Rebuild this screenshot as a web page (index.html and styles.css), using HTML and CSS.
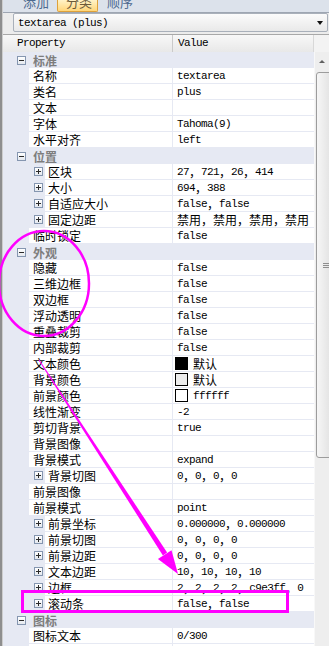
FILE: index.html
```html
<!DOCTYPE html>
<html lang="zh-CN">
<head>
    <meta charset="UTF-8">
    <title>属性</title>
    <link rel="stylesheet" href="styles.css">
</head>
<body>
    <div class="panel">
        <div class="tabs">
            <div class="tab"><span>添加</span></div>
            <div class="tab on"><span>分类</span></div>
            <div class="tab last"><span>顺序</span></div>
        </div>
        <div class="bar">
            <div class="combo"><span>textarea (plus)</span><i class="drop"></i></div>
        </div>
        <div class="head">
            <div class="hp">Property</div>
            <div class="hv">Value</div>
            <div class="hs"></div>
        </div>
        <div class="grid">
            <div class="list">
                <div class="cat"><i class="minus"></i>标准</div>
                <div class="row"><span class="m"></span><span class="n">名称</span><span class="v">textarea</span></div>
                <div class="row"><span class="m"></span><span class="n">类名</span><span class="v">plus</span></div>
                <div class="row"><span class="m"></span><span class="n">文本</span><span class="v"></span></div>
                <div class="row"><span class="m"></span><span class="n">字体</span><span class="v">Tahoma(9)</span></div>
                <div class="row"><span class="m"></span><span class="n">水平对齐</span><span class="v">left</span></div>

                <div class="cat"><i class="minus"></i>位置</div>
                <div class="row sub"><span class="m"><i class="plus"></i></span><span class="n">区块</span><span class="v">27<span class="w">，</span>721<span class="w">，</span>26<span class="w">，</span>414</span></div>
                <div class="row sub"><span class="m"><i class="plus"></i></span><span class="n">大小</span><span class="v">694<span class="w">，</span>388</span></div>
                <div class="row sub"><span class="m"><i class="plus"></i></span><span class="n">自适应大小</span><span class="v">false<span class="w">，</span>false</span></div>
                <div class="row sub"><span class="m"><i class="plus"></i></span><span class="n">固定边距</span><span class="v"><span class="w">禁用，禁用，禁用，禁用</span></span></div>
                <div class="row"><span class="m"></span><span class="n">临时锁定</span><span class="v">false</span></div>

                <div class="cat"><i class="minus"></i>外观</div>
                <div class="row"><span class="m"></span><span class="n">隐藏</span><span class="v">false</span></div>
                <div class="row"><span class="m"></span><span class="n">三维边框</span><span class="v">false</span></div>
                <div class="row"><span class="m"></span><span class="n">双边框</span><span class="v">false</span></div>
                <div class="row"><span class="m"></span><span class="n">浮动透明</span><span class="v">false</span></div>
                <div class="row"><span class="m"></span><span class="n">重叠裁剪</span><span class="v">false</span></div>
                <div class="row"><span class="m"></span><span class="n">内部裁剪</span><span class="v">false</span></div>
                <div class="row"><span class="m"></span><span class="n">文本颜色</span><span class="v"><i class="sw black"></i><span class="w">默认</span></span></div>
                <div class="row"><span class="m"></span><span class="n">背景颜色</span><span class="v"><i class="sw gray"></i><span class="w">默认</span></span></div>
                <div class="row"><span class="m"></span><span class="n">前景颜色</span><span class="v"><i class="sw white"></i>ffffff</span></div>
                <div class="row"><span class="m"></span><span class="n">线性渐变</span><span class="v">-2</span></div>
                <div class="row"><span class="m"></span><span class="n">剪切背景</span><span class="v">true</span></div>
                <div class="row"><span class="m"></span><span class="n">背景图像</span><span class="v"></span></div>
                <div class="row"><span class="m"></span><span class="n">背景模式</span><span class="v">expand</span></div>
                <div class="row sub"><span class="m"><i class="plus"></i></span><span class="n">背景切图</span><span class="v">0<span class="w">，</span>0<span class="w">，</span>0<span class="w">，</span>0</span></div>
                <div class="row"><span class="m"></span><span class="n">前景图像</span><span class="v"></span></div>
                <div class="row"><span class="m"></span><span class="n">前景模式</span><span class="v">point</span></div>
                <div class="row sub"><span class="m"><i class="plus"></i></span><span class="n">前景坐标</span><span class="v">0.000000<span class="w">，</span>0.000000</span></div>
                <div class="row sub"><span class="m"><i class="plus"></i></span><span class="n">前景切图</span><span class="v">0<span class="w">，</span>0<span class="w">，</span>0<span class="w">，</span>0</span></div>
                <div class="row sub"><span class="m"><i class="plus"></i></span><span class="n">前景边距</span><span class="v">0<span class="w">，</span>0<span class="w">，</span>0<span class="w">，</span>0</span></div>
                <div class="row sub"><span class="m"><i class="plus"></i></span><span class="n">文本边距</span><span class="v">10<span class="w">，</span>10<span class="w">，</span>10<span class="w">，</span>10</span></div>
                <div class="row sub"><span class="m"><i class="plus"></i></span><span class="n">边框</span><span class="v">2<span class="w">，</span>2<span class="w">，</span>2<span class="w">，</span>2<span class="w">，</span>c9e3ff<span class="w">，</span>0</span></div>
                <div class="row sub"><span class="m"><i class="plus"></i></span><span class="n">滚动条</span><span class="v">false<span class="w">，</span>false</span></div>

                <div class="cat"><i class="minus"></i>图标</div>
                <div class="row"><span class="m"></span><span class="n">图标文本</span><span class="v">0/300</span></div>
                <div class="row"><span class="m"></span><span class="n"></span><span class="v"></span></div>
            </div>
            <div class="sb">
                <div class="up"><i></i></div>
                <div class="thumb"><i class="grip"></i></div>
            </div>
        </div>
    </div>

    <!-- 标注 -->
    <svg class="marks" width="329" height="646" viewBox="0 0 329 646">
        <ellipse cx="44" cy="283.5" rx="45" ry="52.5" fill="none" stroke="#f0f" stroke-width="2.5"/>
        <polygon points="38.6,360.3 39.4,359.7 167.1,552.6 162.9,555.4" fill="#f0f"/>
        <polygon points="178,574 157.9,559 171.5,550.2" fill="#f0f"/>
        <rect x="22.5" y="591.5" width="265" height="20" fill="none" stroke="#f0f" stroke-width="3"/>
    </svg>
</body>
</html>
```

FILE: styles.css
```css
body {
    margin: 0;
    width: 329px;
    height: 646px;
    overflow: hidden;
    position: relative;
    background: linear-gradient(to right, #8e8e8e 0 2px, #cdcdcd 2px 3px, #ececec 3px);
    font-family: "Liberation Mono", monospace;
}
.panel {
    margin-left: 3px;
    width: 340px;
}
.tabs {
    height: 12px;
    overflow: hidden;
    display: flex;
    padding-left: 16px;
    background: #dce2eb;
    border-bottom: 1px solid #9ea6b2;
}
.tab {
    height: 12px;
    padding: 0 4px;
    color: #4d6a90;
    font-family: "Noto Sans CJK SC", sans-serif;
    font-size: 13px;
}
.tab span {
    display: block;
    line-height: 14px;
    margin-top: -5px;
}
.tab.on {
    margin-left: 4px;
    height: 11px;
    padding: 0 5px 0 8px;
    border: 1px solid #dea13a;
    border-top: none;
    border-radius: 0 0 2px 2px;
    background: linear-gradient(#fff3c8, #ffd67a);
    color: #6b5a3a;
}
.tab.last {
    margin-left: 5px;
}
.bar {
    height: 21px;
    padding-left: 10px;
    background: #ececec;
}
.combo {
    box-sizing: border-box;
    width: 315px;
    height: 19px;
    display: flex;
    align-items: center;
    padding-left: 4px;
    border: 1px solid #a9b0ba;
    border-radius: 2px;
    background: linear-gradient(#fbfbfb, #e9e9e9);
    font-size: 11px;
    letter-spacing: -0.6px;
    color: #000;
}
.drop {
    margin-left: auto;
    margin-right: 4px;
    width: 0;
    height: 0;
    border-left: 3px solid transparent;
    border-right: 3px solid transparent;
    border-top: 4px solid #111;
}
.head {
    display: flex;
    height: 17px;
    border-top: 1px solid #a8a8a8;
    background: linear-gradient(#f8f8f8, #e8e8e8);
    font-size: 11px;
    letter-spacing: -0.6px;
    line-height: 17px;
    color: #000;
}
.hp {
    box-sizing: border-box;
    width: 170px;
    padding-left: 14px;
    border-right: 1px solid #cacaca;
}
.hv {
    box-sizing: border-box;
    width: 141px;
    padding-left: 5px;
    border-right: 1px solid #d8d8d8;
}
.hs {
    flex: 1;
    background: #f3f3f3;
}
.grid {
    display: flex;
    height: 594px;
}
.list {
    width: 311px;
    flex: none;
    background: #e6e9f3;
}
.cat {
    height: 16px;
    display: flex;
    align-items: center;
    padding-left: 14px;
    font-family: "Noto Sans CJK SC", sans-serif;
    font-size: 12px;
    font-weight: bold;
    color: #7d7d7d;
}
.minus, .plus {
    box-sizing: border-box;
    width: 9px;
    height: 9px;
    border: 1px solid #8596b0;
    background: linear-gradient(#ffffff, #e4e8ee);
    position: relative;
    flex: none;
}
.minus {
    margin-right: 7px;
}
.minus::after, .plus::after, .plus::before {
    content: "";
    position: absolute;
    background: #2a2a2a;
}
.minus::after, .plus::after {
    left: 1px;
    top: 3px;
    width: 5px;
    height: 1px;
}
.plus::before {
    left: 3px;
    top: 1px;
    width: 1px;
    height: 5px;
}
.row {
    display: grid;
    grid-template-columns: 26px 143px 1fr;
    height: 15px;
    margin-bottom: 1px;
}
.row.sub {
    grid-template-columns: 42px 127px 1fr;
}
.m {
    display: flex;
    align-items: center;
}
.plus {
    display: block;
    margin-left: 31px;
}
.n {
    background: #fff;
    padding-left: 4px;
    font-family: "Noto Sans CJK SC", sans-serif;
    font-size: 12px;
    line-height: 15px;
    color: #000;
    white-space: nowrap;
    overflow: hidden;
}
.sub .n {
    padding-left: 3px;
}
.v {
    background: #fff;
    margin-left: 1px;
    padding-left: 4px;
    font-size: 11px;
    letter-spacing: -0.6px;
    line-height: 16px;
    color: #000;
    white-space: nowrap;
    overflow: hidden;
    display: flex;
    align-items: center;
}
.w {
    font-family: "Noto Sans CJK SC", sans-serif;
    font-size: 12px;
    letter-spacing: 0;
    line-height: 15px;
}
.sw {
    display: inline-block;
    width: 11px;
    height: 11px;
    border: 1px solid #000;
    margin: 0 5px 0 -2px;
    flex: none;
}
.sw.black { background: #000; }
.sw.gray { background: #ececec; }
.sw.white { background: #fff; }
.sb {
    width: 17px;
    flex: none;
    background: #eeeeee;
    border-left: 1px solid #f8f8f8;
}
.up {
    height: 18px;
    display: flex;
    justify-content: center;
    align-items: center;
    padding-right: 4px;
}
.up i {
    width: 0;
    height: 0;
    border-left: 3px solid transparent;
    border-right: 3px solid transparent;
    border-bottom: 3px solid #606060;
}
.thumb {
    box-sizing: border-box;
    height: 386px;
    margin: 2px 0 0 1px;
    border: 1px solid #9c9c9c;
    border-radius: 3px;
    background: linear-gradient(to right, #f6f6f6, #e2e2e2);
    display: flex;
    align-items: center;
    padding-left: 6px;
}
.grip {
    width: 6px;
    height: 5px;
    background: repeating-linear-gradient(#8e8e8e 0 1px, transparent 1px 2px);
}
.marks {
    position: absolute;
    left: 0;
    top: 0;
    pointer-events: none;
}
```
